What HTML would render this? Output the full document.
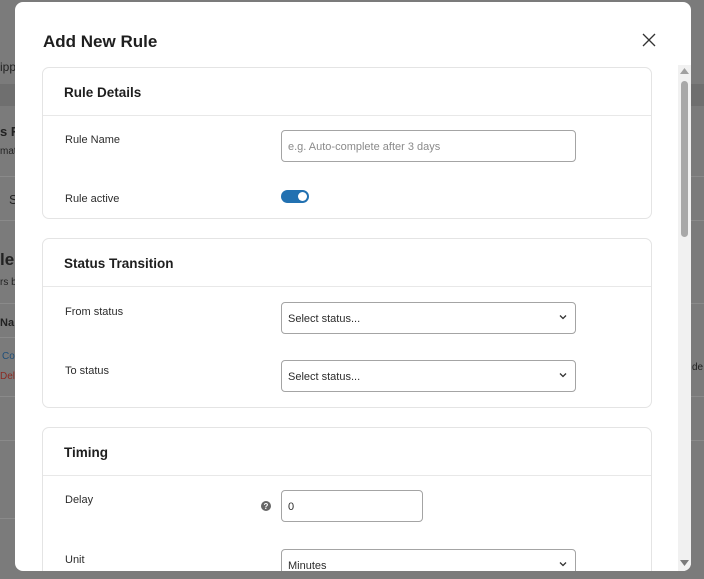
<!DOCTYPE html>
<html><head><style>
*{box-sizing:border-box;margin:0;padding:0}
body{width:704px;height:579px;overflow:hidden;background:#7b7b7b;font-family:"Liberation Sans",sans-serif;position:relative}
.bg{position:absolute;color:#222;font-size:12px}
.line{position:absolute;height:1px;background:#8a8a8a}
.modal{position:absolute;left:15px;top:2px;width:676px;height:569px;background:#fff;border-radius:8px;overflow:hidden}
h1{position:absolute;left:28px;top:30px;font-size:17px;font-weight:bold;color:#1e1e1e}
.x{position:absolute;left:626px;top:30px}
.card{position:absolute;left:27px;width:610px;border:1px solid #e4e4e4;border-radius:7px;background:#fff}
.card h2{height:48px;border-bottom:1px solid #e8e8e8;font-size:13.5px;font-weight:bold;color:#1e1e1e;padding:17px 21px 0}
.lbl{position:absolute;left:22px;font-size:11px;color:#2c2c2c}
.inp{position:absolute;left:238px;width:295px;height:32px;border:1px solid #a4a4a4;border-radius:4px;font-size:11px;color:#2c2c2c;padding:10px 6px 0}
.chev{position:absolute;right:8px;top:11px}
.track{position:absolute;left:663px;top:63px;width:13px;height:506px;background:#f1f1f1}
</style></head><body>
<div class="bg" style="left:0;top:60px">ipp</div>
<div class="line" style="left:0;top:84px;width:15px;background:#6f6f6f;height:22px"></div>
<div class="bg" style="left:0;top:124px;font-size:13px;font-weight:bold">s F</div>
<div class="bg" style="left:0;top:146px;font-size:10px">mat</div>
<div class="line" style="left:0;top:176px;width:15px"></div>
<div class="bg" style="left:9px;top:192px;font-size:13px">S</div>
<div class="line" style="left:0;top:220px;width:15px"></div>
<div class="bg" style="left:0;top:250px;font-size:17px;font-weight:bold">le</div>
<div class="bg" style="left:0;top:277px;font-size:10px">rs b</div>
<div class="line" style="left:0;top:303px;width:15px"></div>
<div class="bg" style="left:0;top:317px;font-size:11px;font-weight:bold">Na</div>
<div class="line" style="left:0;top:337px;width:15px"></div>
<div class="bg" style="left:2px;top:351px;font-size:10px;color:#1f4f7a">Co</div>
<div class="bg" style="left:0;top:371px;font-size:10px;color:#8b2a22">Del</div>
<div class="line" style="left:0;top:396px;width:15px"></div>
<div class="line" style="left:0;top:440px;width:15px"></div>
<div class="line" style="left:0;top:518px;width:15px"></div>
<div class="line" style="left:691px;top:84px;width:13px;background:#6f6f6f;height:22px"></div>
<div class="line" style="left:691px;top:176px;width:13px"></div>
<div class="line" style="left:691px;top:220px;width:13px"></div>
<div class="line" style="left:691px;top:303px;width:13px"></div>
<div class="bg" style="left:692px;top:362px;font-size:10px">de</div>
<div class="line" style="left:691px;top:396px;width:13px"></div>
<div class="line" style="left:691px;top:440px;width:13px"></div>
<div class="modal">
<h1>Add New Rule</h1>
<svg class="x" width="16" height="16" viewBox="0 0 16 16"><path d="M2 2L14 14M14 2L2 14" stroke="#333" stroke-width="1.3"/></svg>
<div class="card" style="top:65px;height:152px"><h2>Rule Details</h2>
<div class="lbl" style="top:66px">Rule Name</div>
<div class="inp" style="top:62px;color:#8a8a8a">e.g. Auto-complete after 3 days</div>
<div class="lbl" style="top:125px">Rule active</div>
<div style="position:absolute;left:238px;top:122px;width:28px;height:13px;border-radius:7px;background:#2271b1"><div style="position:absolute;right:2px;top:2px;width:9px;height:9px;border-radius:50%;background:#fff"></div></div>
</div>
<div class="card" style="top:236px;height:170px"><h2>Status Transition</h2>
<div class="lbl" style="top:67px">From status</div>
<div class="inp" style="top:63px">Select status...<svg class="chev" width="8" height="6" viewBox="0 0 8 6"><path d="M1 1.5L4 4.5L7 1.5" stroke="#333" stroke-width="1.3" fill="none"/></svg></div>
<div class="lbl" style="top:126px">To status</div>
<div class="inp" style="top:121px">Select status...<svg class="chev" width="8" height="6" viewBox="0 0 8 6"><path d="M1 1.5L4 4.5L7 1.5" stroke="#333" stroke-width="1.3" fill="none"/></svg></div>
</div>
<div class="card" style="top:425px;height:200px"><h2>Timing</h2>
<div class="lbl" style="top:66px">Delay</div>
<svg style="position:absolute;left:218px;top:73px" width="10" height="10" viewBox="0 0 10 10"><circle cx="5" cy="5" r="5" fill="#666"/><text x="5" y="8" font-size="8" font-weight="bold" fill="#fff" text-anchor="middle" font-family="Liberation Sans">?</text></svg>
<div class="inp" style="top:62px;width:142px">0</div>
<div class="lbl" style="top:126px">Unit</div>
<div class="inp" style="top:121px">Minutes<svg class="chev" width="8" height="6" viewBox="0 0 8 6"><path d="M1 1.5L4 4.5L7 1.5" stroke="#333" stroke-width="1.3" fill="none"/></svg></div>
</div>
<div class="track"></div>
<svg style="position:absolute;left:665px;top:66px" width="9" height="6"><path d="M0 6L4.5 0L9 6Z" fill="#a0a0a0"/></svg>
<div style="position:absolute;left:666px;top:79px;width:7px;height:156px;border-radius:4px;background:#a8a8a8"></div>
<svg style="position:absolute;left:665px;top:558px" width="9" height="6"><path d="M0 0L4.5 6L9 0Z" fill="#7a7a7a"/></svg>
</div>
</body></html>
